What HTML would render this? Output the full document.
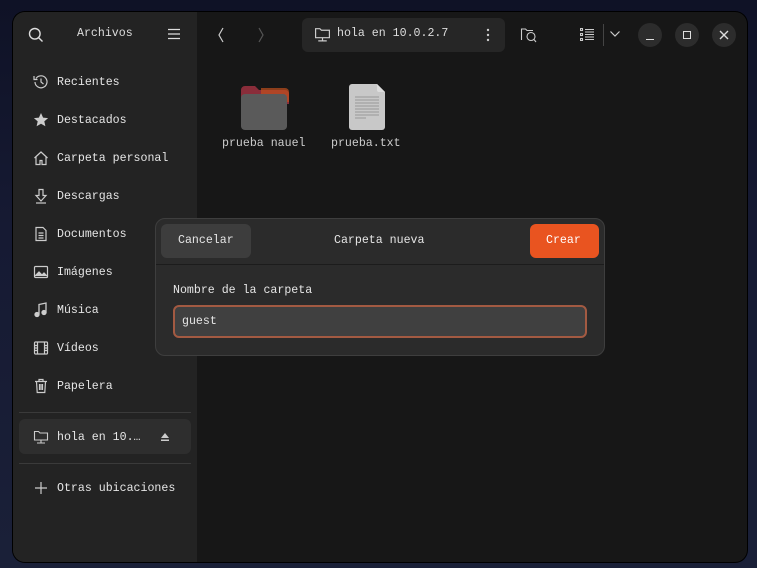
<!DOCTYPE html>
<html><head><meta charset="utf-8"><style>
*{margin:0;padding:0;box-sizing:border-box}
body{width:757px;height:568px;overflow:hidden;background:linear-gradient(180deg,#0f1226 0%,#161a33 40%,#1a2038 100%);font-family:"Liberation Mono",monospace;font-size:11.6px;color:#e6e6e6;position:relative}
.win{position:absolute;left:13px;top:12px;width:734px;height:550px;border-radius:12px;overflow:hidden;background:#171717;box-shadow:0 0 0 1px #000}
.side{position:absolute;left:0;top:0;width:184px;height:100%;background:#232323}
.t{position:absolute;white-space:nowrap}
.item{position:absolute;left:20px;height:20px;display:flex;align-items:center;gap:8px}
.item svg{width:16px;height:16px}
.sep{position:absolute;left:6px;width:172px;height:1px;background:#3a3a3a}
.btnc{position:absolute;width:24px;height:24px;border-radius:12px;background:#2c2c2c}
.dlg{position:absolute;left:155px;top:218px;width:450px;height:138px;background:#2b2b2b;border-radius:10px;border:1px solid #3e3e3e}
</style></head><body>
<div class="win">
 <div class="side">
  <svg class="t" style="left:15px;top:15px" width="16" height="16" viewBox="0 0 16 16" fill="none" stroke="#ddd" stroke-width="1.4"><circle cx="6.8" cy="6.8" r="5.3"/><path d="M10.7 10.7L14.5 14.5"/></svg>
  <div class="t" style="left:64px;top:15px;color:#ddd">Archivos</div>
  <svg class="t" style="left:155px;top:16px" width="12" height="12" viewBox="0 0 12 12" stroke="#ddd" stroke-width="1.2"><path d="M0 1.5h12M0 6h12M0 10.5h12"/></svg>
  <div class="item" style="top:60px"><svg viewBox="0 0 16 16" fill="none" stroke="#ccc" stroke-width="1.2"><path d="M3 4.5A6 6 0 1 1 2 8"/><path d="M1 2v3.5h3.5"/><path d="M8 4.5V8l2.5 2"/></svg>Recientes</div>
  <div class="item" style="top:98px"><svg viewBox="0 0 16 16" fill="#ccc"><path d="M8 1l2.1 4.6 5 .5-3.8 3.3 1.1 4.9L8 11.8 3.6 14.3l1.1-4.9L.9 6.1l5-.5z"/></svg>Destacados</div>
  <div class="item" style="top:136px"><svg viewBox="0 0 16 16" fill="none" stroke="#ccc" stroke-width="1.2"><path d="M1.5 8L8 2l6.5 6M3 7v7.5h4v-4h2v4h4V7"/></svg>Carpeta personal</div>
  <div class="item" style="top:174px"><svg viewBox="0 0 16 16" fill="none" stroke="#ccc" stroke-width="1.2"><path d="M6 1.5h4v6h3L8 13 3 7.5h3z"/><path d="M3 15h10"/></svg>Descargas</div>
  <div class="item" style="top:212px"><svg viewBox="0 0 16 16" fill="none" stroke="#ccc" stroke-width="1.2"><path d="M3 1.5h7l3 3v10H3z"/><path d="M5.5 7h5M5.5 9.5h5M5.5 12h5"/></svg>Documentos</div>
  <div class="item" style="top:250px"><svg viewBox="0 0 16 16" fill="none" stroke="#ccc" stroke-width="1.2"><rect x="1.5" y="2.5" width="13" height="11" rx="1"/><path d="M2 12l4-4 3 3 2-2 3 3" fill="#ccc"/></svg>Imágenes</div>
  <div class="item" style="top:288px"><svg viewBox="0 0 16 16" fill="none" stroke="#ccc" stroke-width="1.3"><path d="M6 12V2.5l7-1.5v9.5"/><circle cx="4" cy="12.5" r="2" fill="#ccc"/><circle cx="11" cy="10.5" r="2" fill="#ccc"/></svg>Música</div>
  <div class="item" style="top:326px"><svg viewBox="0 0 16 16" fill="none" stroke="#ccc" stroke-width="1.2"><rect x="1.5" y="2" width="13" height="12" rx="1"/><path d="M4.5 2v12M11.5 2v12M1.5 5.5h3M1.5 8h3M1.5 10.5h3M11.5 5.5h3M11.5 8h3M11.5 10.5h3"/></svg>Vídeos</div>
  <div class="item" style="top:364px"><svg viewBox="0 0 16 16" fill="none" stroke="#ccc" stroke-width="1.2"><path d="M2 3.5h12M6 3.5V1.5h4v2M3.5 3.5l.7 11h7.6l.7-11M6.5 6v6M8 6v6M9.5 6v6"/></svg>Papelera</div>
  <div class="sep" style="top:400px"></div>
  <div style="position:absolute;left:6px;top:407px;width:172px;height:35px;background:#2e2e2e;border-radius:6px"></div>
  <div class="item" style="top:415px"><svg viewBox="0 0 16 16" fill="none" stroke="#ccc" stroke-width="1.1"><path d="M1.5 11V2.5h4l1.5 1.5h7.5v7z"/><path d="M8 11v2.5M4 14h8"/></svg>hola en 10.…</div>
  <svg class="t" style="left:147px;top:420px" width="10" height="10" viewBox="0 0 10 10" fill="#ccc"><path d="M5 1l4 5H1z"/><rect x="1" y="7.5" width="8" height="1.5"/></svg>
  <div class="sep" style="top:451px"></div>
  <div class="item" style="top:466px"><svg viewBox="0 0 16 16" stroke="#ccc" stroke-width="1.2"><path d="M8 2v12M2 8h12"/></svg>Otras ubicaciones</div>
 </div>
 <svg class="t" style="left:203px;top:14px" width="10" height="18" viewBox="0 0 10 18" fill="none" stroke="#ccc" stroke-width="1.2"><path d="M7 2L3 9l4 7"/></svg>
 <svg class="t" style="left:243px;top:14px" width="10" height="18" viewBox="0 0 10 18" fill="none" stroke="#555" stroke-width="1.2"><path d="M3 2l4 7-4 7"/></svg>
 <div style="position:absolute;left:289px;top:6px;width:203px;height:34px;background:#262626;border-radius:6px"></div>
 <svg class="t" style="left:301px;top:14px" width="17" height="17" viewBox="0 0 16 16" fill="none" stroke="#ccc" stroke-width="1.1"><path d="M1.5 11V2.5h4l1.5 1.5h7.5v7z"/><path d="M8 11v2.5M4 14h8"/></svg>
 <div class="t" style="left:324px;top:15px;color:#ddd">hola en 10.0.2.7</div>
 <svg class="t" style="left:473px;top:16px" width="4" height="14" viewBox="0 0 4 14" fill="#ccc"><circle cx="2" cy="2" r="1.2"/><circle cx="2" cy="7" r="1.2"/><circle cx="2" cy="12" r="1.2"/></svg>
 <svg class="t" style="left:507px;top:14px" width="18" height="18" viewBox="0 0 18 18" fill="none" stroke="#ccc" stroke-width="1.1"><path d="M1.5 14V3h4l1.5 1.5h6"/><circle cx="11" cy="10.5" r="4"/><path d="M14 13.5l2 2.5"/></svg>
 <svg class="t" style="left:567px;top:16px" width="14" height="13" viewBox="0 0 14 13" stroke="#ccc" stroke-width="1.1" fill="none"><rect x="0.5" y="0.5" width="2" height="2"/><rect x="0.5" y="5.5" width="2" height="2"/><rect x="0.5" y="10.5" width="2" height="2"/><path d="M5 1.5h9M5 4h9M5 6.5h9M5 9h9M5 11.5h9"/></svg>
 <div style="position:absolute;left:590px;top:12px;width:1px;height:22px;background:#444"></div>
 <svg class="t" style="left:596px;top:18px" width="12" height="8" viewBox="0 0 12 8" fill="none" stroke="#ccc" stroke-width="1.2"><path d="M1.5 1.5L6 6l4.5-4.5"/></svg>
 <div class="btnc" style="left:625px;top:11px"></div><div style="position:absolute;left:633px;top:27px;width:8px;height:1.3px;background:#ddd"></div>
 <div class="btnc" style="left:662px;top:11px"></div><div style="position:absolute;left:670px;top:19px;width:8px;height:8px;border:1.3px solid #ddd"></div>
 <div class="btnc" style="left:699px;top:11px"></div>
 <svg class="t" style="left:706px;top:18px" width="10" height="10" viewBox="0 0 10 10" stroke="#ddd" stroke-width="1.4"><path d="M1 1l8 8M9 1L1 9"/></svg>
 <!-- files -->
 <svg class="t" style="left:228px;top:72px" width="48" height="46" viewBox="0 0 48 46"><path d="M0 6a4 4 0 0 1 4-4h10l4 4h26a4 4 0 0 1 4 4v10H0z" fill="#8a2d3a"/><path d="M20 4h24a4 4 0 0 1 4 4v10H20z" fill="#c0501e" opacity=".7"/><rect x="0" y="10" width="46" height="36" rx="4" fill="#5a5a5a"/></svg>
 <div class="t" style="left:209px;top:125px;color:#ccc">prueba nauel</div>
 <svg class="t" style="left:336px;top:72px" width="36" height="46" viewBox="0 0 36 46"><path d="M3 0h25l8 8v35a3 3 0 0 1-3 3H3a3 3 0 0 1-3-3V3a3 3 0 0 1 3-3z" fill="#c8c8c8"/><path d="M28 0v6a2 2 0 0 0 2 2h6" fill="#ddd"/><g stroke="#888" stroke-width="0.8"><path d="M6 13h24M6 16h24M6 19h24M6 22h24M6 25h24M6 28h24M6 31h24M6 34h11"/></g></svg>
 <div class="t" style="left:318px;top:125px;color:#ccc">prueba.txt</div>
</div>
<div class="dlg">
 <div style="position:absolute;left:5px;top:5px;width:90px;height:34px;background:#3d3d3d;border-radius:6px"></div>
 <div class="t" style="left:22px;top:15px">Cancelar</div>
 <div class="t" style="left:178px;top:15px">Carpeta nueva</div>
 <div style="position:absolute;left:374px;top:5px;width:69px;height:34px;background:#e95420;border-radius:6px"></div>
 <div class="t" style="left:390px;top:15px;color:#fff">Crear</div>
 <div style="position:absolute;left:0;top:45px;width:100%;height:1px;background:#1c1c1c"></div>
 <div class="t" style="left:17px;top:65px">Nombre de la carpeta</div>
 <div style="position:absolute;left:17px;top:86px;width:414px;height:33px;background:#404040;border:2px solid #a35a42;border-radius:6px"></div>
 <div class="t" style="left:26px;top:96px">guest</div>
</div>
</body></html>
